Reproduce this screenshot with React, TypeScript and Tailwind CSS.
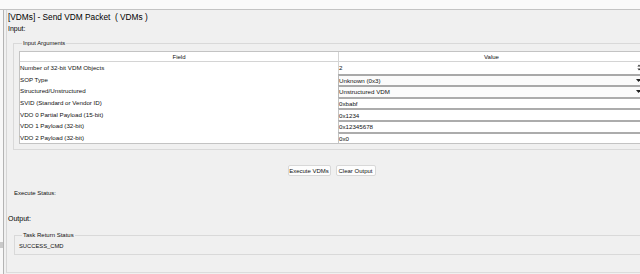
import React from "react";

const rows: [string, string, "spin" | "select" | "text"][] = [
  ["Number of 32-bit VDM Objects", "2", "spin"],
  ["SOP Type", "Unknown (0x3)", "select"],
  ["Structured/Unstructured", "Unstructured VDM", "select"],
  ["SVID (Standard or Vendor ID)", "0xbabf", "text"],
  ["VDO 0 Partial Payload (15-bit)", "0x1234", "text"],
  ["VDO 1 Payload (32-bit)", "0x12345678", "text"],
  ["VDO 2 Payload (32-bit)", "0x0", "text"],
];

function Spin() {
  return (
    <svg width="4" height="7" viewBox="0 0 4 7" className="mr-[3px]">
      <path d="M2 0.5 L3.6 2.6 L0.4 2.6 Z" fill="#333" />
      <path d="M2 6.5 L3.6 4.4 L0.4 4.4 Z" fill="#333" />
    </svg>
  );
}

function Arrow() {
  return (
    <svg width="5" height="3" viewBox="0 0 5 3" className="mr-[3px]">
      <path d="M0 0 L5 0 L2.5 3 Z" fill="#222" />
    </svg>
  );
}

export default function App() {
  return (
    <div className="w-[640px] h-[274px] overflow-hidden bg-[#f0f0f0] font-['Liberation_Sans',Arial,sans-serif] text-[#111] flex flex-col">
      <div className="h-[9px] shrink-0 bg-[#fafafa] border-b border-[#c4c4c4] box-content" />
      <div className="flex flex-1 min-h-0">
        <div className="w-[3px] shrink-0 bg-[#f8f8f8] flex flex-col">
          <div className="mt-[232px] h-[6px] bg-[#c9c9c9]" />
        </div>
        <div className="w-[3px] shrink-0 border-l border-[#b4b4b4]" />
        <div className="w-[660px] shrink-0 border-l border-[#d6d6d6] border-b border-b-[#dcdcdc] h-[263px] pl-px flex flex-col">
          <div className="h-[14px] leading-[14px] text-[8.3px] text-black">[VDMs] - Send VDM Packet&nbsp; ( VDMs )</div>
          <div className="h-[9px] leading-[9px] text-[7px] text-black">Input:</div>

          <fieldset className="mt-[6px] ml-[5px] w-[640px] border border-[#d9d9d9] pl-[5px] pb-[5px] pt-[4px]">
            <legend className="ml-[3px] px-[1px] h-[8px] leading-[8px] text-[5.8px]">Input Arguments</legend>
            <div className="w-[625px] border border-[#c3c3c3] bg-white">
              <div className="grid grid-cols-[318px_306px] h-[10px] border-b border-[#d4d4d4] text-[6px] leading-[10px]">
                <div className="text-center">Field</div>
                <div className="text-center border-l border-[#d4d4d4]">Value</div>
              </div>
              {rows.map(([f, v, kind], i) => (
                <div key={i} className="grid grid-cols-[318px_306px] h-[11.6px] text-[6.2px]">
                  <div className="flex items-center">{f}</div>
                  <div
                    className={
                      i === 0
                        ? "flex items-center justify-between border-l border-[#d4d4d4] bg-white"
                        : kind === "select"
                        ? "flex items-center justify-between border-l border-t-2 border-[#a9a9a9] border-l-[#b8b8b8] bg-[#fbfbfb]"
                        : "flex items-center justify-between border-l border-t-2 border-[#acacac] border-l-[#c4c4c4] bg-white"
                    }
                  >
                    <span>{v}</span>
                    {kind === "spin" ? <Spin /> : kind === "select" ? <Arrow /> : null}
                  </div>
                </div>
              ))}
            </div>
          </fieldset>

          <div className="mt-[15px] ml-[11px] w-[625px] flex justify-center gap-[5px]">
            <div className="w-[43px] h-[11px] leading-[10px] text-center text-[6px] bg-[#fdfdfd] border border-[#d8d8d8] rounded-[2px]">Execute VDMs</div>
            <div className="w-[40px] h-[11px] leading-[10px] text-center text-[6px] bg-[#fdfdfd] border border-[#d8d8d8] rounded-[2px]">Clear Output</div>
          </div>

          <div className="mt-[13px] ml-[6px] h-[9px] leading-[9px] text-[6px]">Execute Status:</div>
          <div className="mt-[16px] h-[9px] leading-[9px] text-[7px] text-black">Output:</div>

          <fieldset className="mt-[8px] ml-[6px] w-[640px] border border-[#d9d9d9] pl-[4px] pb-[3px]">
            <legend className="ml-[3px] px-[1px] h-[8px] leading-[8px] text-[6px]">Task Return Status</legend>
            <div className="mt-[3px] h-[9px] leading-[9px] text-[5.8px]">SUCCESS_CMD</div>
          </fieldset>
        </div>
      </div>
    </div>
  );
}
